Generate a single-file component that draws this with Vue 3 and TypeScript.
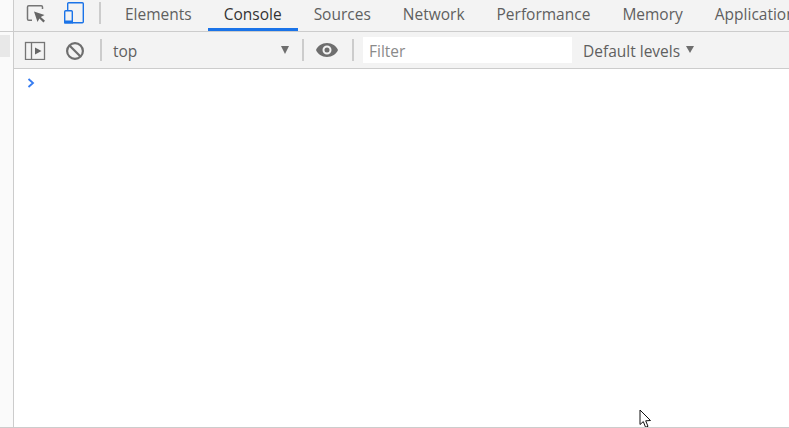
<script setup lang="ts">
const tabs: { name: string; active?: boolean }[] = [
  { name: 'Elements' },
  { name: 'Console', active: true },
  { name: 'Sources' },
  { name: 'Network' },
  { name: 'Performance' },
  { name: 'Memory' },
  { name: 'Application' },
]
</script>

<template>
  <div class="page">
    <aside class="side">
      <div class="side-top"></div>
      <div class="side-body"><div class="side-item"></div></div>
    </aside>
    <main class="main">
      <div class="tabbar">
        <div class="tab-icons">
          <svg class="ic" width="24" height="24" viewBox="0 0 24 24" fill="none">
            <path d="M8 19.300H4.800a1.300 1.300 0 0 1-1.300-1.300V6a1.300 1.300 0 0 1 1.300-1.300h12.400A1.300 1.300 0 0 1 18.500 6v2" stroke="#757575" stroke-width="1.500"/>
            <path d="M10 10.500 L20.500 14 L16.800 16 L21 19.800 L19.400 21.400 L15.400 17.400 L13.500 21 Z" fill="#666"/>
          </svg>
          <svg class="ic ic-dev" width="24" height="24" viewBox="0 0 24 24" fill="none">
            <path d="M5.700 9V2.800a1 1 0 0 1 1-1h13.600a1 1 0 0 1 1 1V20.800a1 1 0 0 1-1 1H10" stroke="#1a73e8" stroke-width="1.400"/>
            <rect x="2.700" y="9.700" width="7.600" height="12.100" rx="1" stroke="#1a73e8" stroke-width="1.400"/>
            <rect x="2" y="19.500" width="9" height="3" fill="#1a73e8"/>
          </svg>
          <span class="sep sep-tab"></span>
        </div>
        <div class="tabs">
          <div v-for="t in tabs" :key="t.name" class="tab" :class="{ active: t.active }">{{ t.name }}</div>
        </div>
      </div>
      <div class="toolbar">
        <svg class="tool-sidebar" width="22" height="20" viewBox="0 0 22 20" fill="none">
          <rect x="1.500" y="2.500" width="19" height="17" stroke="#757575" stroke-width="1.300"/>
          <path d="M7.500 2.500V19.500" stroke="#757575" stroke-width="1.300"/>
          <path d="M11 7.500 L17.500 11 L11 14.500 Z" fill="#666"/>
        </svg>
        <svg class="tool-clear" width="20" height="20" viewBox="0 0 20 20" fill="none">
          <circle cx="10" cy="11" r="7.900" stroke="#6e6e6e" stroke-width="2.200"/>
          <path d="M4.500 5.500 L15.500 16.500" stroke="#6e6e6e" stroke-width="2.200"/>
        </svg>
        <span class="sep sep-a"></span>
        <div class="context">
          <span class="label">top</span>
          <span class="tri"></span>
        </div>
        <span class="sep sep-b"></span>
        <svg class="tool-eye" width="24" height="16" viewBox="0 0 24 16">
          <path fill-rule="evenodd" fill="#6e6e6e" d="M12 1C6.800 1 2.700 3.900 1 8c1.700 4.100 5.800 7 11 7s9.300-2.900 11-7c-1.700-4.100-5.800-7-11-7zm0 11.500a4.500 4.500 0 1 1 0-9 4.500 4.500 0 0 1 0 9zm0-7a2.500 2.500 0 1 0 0 5 2.500 2.500 0 0 0 0-5z"/>
        </svg>
        <span class="sep sep-c"></span>
        <div class="filter">Filter</div>
        <div class="levels">
          <span class="label">Default levels</span>
          <span class="tri tri-small"></span>
        </div>
      </div>
      <div class="console">
        <svg width="8" height="10" viewBox="0 0 8 10" fill="none">
          <path d="M1.500 1 L6 5 L1.500 9" stroke="#367cf1" stroke-width="1.800"/>
        </svg>
        <svg class="cursor" width="14" height="20" viewBox="0 0 14 20">
          <path d="M1 1 V15.500 L4.300 12.600 L6.600 18.300 L9 17.300 L6.700 11.800 L11.500 11.500 Z" fill="#fff" stroke="#111" stroke-width="1"/>
        </svg>
      </div>
    </main>
  </div>
</template>

<style>
html, body { margin: 0; background: #fff; }
</style>

<style scoped>
.page {
  display: flex;
  width: 789px;
  height: 428px;
  box-sizing: border-box;
  border-bottom: 1px solid #ccc;
  overflow: hidden;
  font-family: "Open Sans", "Noto Sans", sans-serif;
  color: #5f5f5f;
}
.side {
  width: 14px;
  flex: none;
  box-sizing: border-box;
  background: #fafafa;
  border-right: 1px solid #ccc;
}
.side-top { height: 32px; box-sizing: border-box; border-bottom: 1px solid #ccc; }
.side-body { padding-top: 3px; }
.side-item { width: 10px; height: 22px; background: #e8e8e8; }
.main { flex: 1; min-width: 0; display: flex; flex-direction: column; }
.tabbar {
  height: 32px;
  box-sizing: border-box;
  flex: none;
  display: flex;
  background: #f3f3f3;
  border-bottom: 1px solid #ccc;
}
.tab-icons {
  display: flex;
  align-items: flex-start;
  flex: none;
  width: 95px;
  padding: 1px 0 0 10px;
  box-sizing: border-box;
}
.ic { flex: none; }
.ic-dev { margin-left: 14px; }
.sep { width: 2px; height: 22px; background: #ccc; flex: none; display: block; }
.sep-tab { margin: 1px 0 0 13px; }
.tabs { display: flex; flex: none; }
.tab {
  height: 31px;
  box-sizing: border-box;
  padding: 0 16px;
  font-size: 15.500px;
  line-height: 28px;
  white-space: nowrap;
  color: #5f5f5f;
}
.tab.active {
  color: #333;
  border-bottom: 3px solid #1a73e8;
}
.toolbar {
  height: 37px;
  box-sizing: border-box;
  flex: none;
  display: flex;
  align-items: center;
  background: #f3f3f3;
  border-bottom: 1px solid #ccc;
}
.tool-sidebar { margin-left: 10px; flex: none; }
.tool-clear { margin-left: 19px; flex: none; }
.sep-a { margin-left: 15px; }
.context {
  width: 200px;
  padding: 0 13px 0 11px;
  box-sizing: border-box;
  flex: none;
  display: flex;
  align-items: center;
  justify-content: space-between;
  font-size: 15.500px;
}
.label { padding-top: 1px; }
.tri {
  width: 0;
  height: 0;
  border-left: 4.500px solid transparent;
  border-right: 4.500px solid transparent;
  border-top: 8px solid #6e6e6e;
}
.tri-small {
  margin-left: 6px;
  margin-top: -1px;
  border-top-width: 7px;
}
.tool-eye { margin-left: 11px; flex: none; }
.sep-c { margin-left: 13px; }
.filter {
  margin-left: 9px;
  width: 209px;
  height: 26px;
  flex: none;
  box-sizing: border-box;
  background: #fff;
  padding-left: 6px;
  font-size: 15.500px;
  line-height: 28px;
  color: #8a8a8a;
}
.levels {
  margin-left: 11px;
  display: flex;
  align-items: center;
  font-size: 15.500px;
  white-space: nowrap;
}
.console {
  position: relative;
  flex: 1;
  padding: 9px 0 0 13px;
  background: #fff;
}
.console > svg:first-child { display: block; }
.cursor { position: absolute; left: 625px; top: 340px; }
</style>
